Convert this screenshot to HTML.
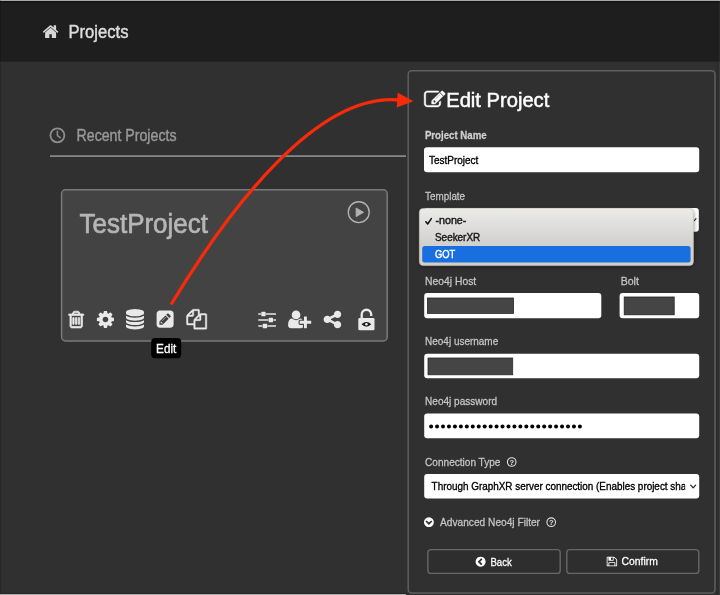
<!DOCTYPE html>
<html lang="en"><head><meta charset="utf-8"><title>Projects - Edit Project</title>
<style>
*{box-sizing:border-box;margin:0;padding:0}
html,body{width:720px;height:595px;overflow:hidden;background:#303030}
body{font-family:"Liberation Sans",sans-serif}
svg{display:block;position:absolute;left:0;top:0;will-change:transform}
text{font-family:"Liberation Sans",sans-serif;white-space:pre}
</style></head><body>
<svg width="720" height="595" viewBox="0 0 720 595" role="img" aria-label="Projects page with Edit Project panel">
<linearGradient id="ddg" x1="0" y1="0" x2="0" y2="1"><stop offset="0" stop-color="#ebebe9"/><stop offset="0.62" stop-color="#d2d1cf"/><stop offset="1" stop-color="#d2cec7"/></linearGradient>
<filter id="sh" x="-10%" y="-20%" width="120%" height="150%"><feGaussianBlur stdDeviation="2.2"/></filter>
<clipPath id="selclip"><rect x="424" y="474" width="261.2" height="25"/></clipPath>
<rect x="0" y="0" width="720" height="595" fill="#303030" />
<rect x="0" y="0" width="720" height="61.7" fill="#1e1e1e" />
<rect x="0" y="0" width="720" height="0.85" fill="#e0e0e0" />
<rect x="0" y="0.85" width="720" height="1.8" fill="#141414" />
<rect x="0" y="0" width="1" height="595" fill="#000" opacity="0.2"/>
<rect x="716" y="62" width="2.7" height="533" fill="#2c2c2c" />
<rect x="718.7" y="0" width="1.3" height="595" fill="#fff" opacity="0.05"/>
<path fill="#d6d6d6" transform="matrix(0.00955 0 0 -0.01005 42.65 38.10)" d="M1408 544v-480q0 -26 -19 -45t-45 -19h-384v384h-256v-384h-384q-26 0 -45 19t-19 45v480q0 1 0.5 3t0.5 3l575 474l575 -474q1 -2 1 -6zM1631 613l-62 -74q-8 -9 -21 -11h-3q-13 0 -21 7l-692 577l-692 -577q-12 -8 -24 -7q-13 2 -21 11l-62 74q-8 10 -7 23.5t11 21.5
l719 599q32 26 76 26t76 -26l244 -204v195q0 14 9 23t23 9h192q14 0 23 -9t9 -23v-408l219 -182q10 -8 11 -21.5t-7 -23.5z" />
<text x="68.50" y="38.10" font-size="18.72" fill="#dddddd" stroke="#dddddd" stroke-width="0.45" textLength="60.00" lengthAdjust="spacingAndGlyphs" >Projects</text>
<circle cx="57.4" cy="135.3" r="7.0" fill="none" stroke="#8f8f8f" stroke-width="1.8"/><path d="M57.4 131.2 V135.6 L60.2 137.6" fill="none" stroke="#8f8f8f" stroke-width="1.5" stroke-linecap="round" stroke-linejoin="round"/>
<text x="76.60" y="141.00" font-size="15.6" fill="#9a9a9a" stroke="#9a9a9a" stroke-width="0.37" textLength="99.88" lengthAdjust="spacingAndGlyphs" >Recent Projects</text>
<rect x="50" y="155.2" width="356" height="1.8" fill="#858585" />
<rect x="61.6" y="189.8" width="325.6" height="151.2" rx="4" fill="#434343" stroke="#7a7a7a" stroke-width="1.5"/>
<text x="79.50" y="233.25" font-size="27.04" fill="#b6b6b6" stroke="#b6b6b6" stroke-width="0.65" textLength="128.47" lengthAdjust="spacingAndGlyphs" >TestProject</text>
<circle cx="358.75" cy="212.15" r="10.45" fill="none" stroke="#b2b2b2" stroke-width="1.35"/><path d="M356.1 208.0 L363.6 212.3 L356.1 216.7 Z" fill="#b2b2b2" stroke="#b2b2b2" stroke-width="0.8" stroke-linejoin="round"/>
<path fill="#e9e9e9" transform="matrix(0.01080 0 0 -0.01087 68.60 326.51)" d="M512 800v-576q0 -14 -9 -23t-23 -9h-64q-14 0 -23 9t-9 23v576q0 14 9 23t23 9h64q14 0 23 -9t9 -23zM768 800v-576q0 -14 -9 -23t-23 -9h-64q-14 0 -23 9t-9 23v576q0 14 9 23t23 9h64q14 0 23 -9t9 -23zM1024 800v-576q0 -14 -9 -23t-23 -9h-64q-14 0 -23 9t-9 23v576
q0 14 9 23t23 9h64q14 0 23 -9t9 -23zM1152 76v948h-896v-948q0 -22 7 -40.5t14.5 -27t10.5 -8.5h832q3 0 10.5 8.5t14.5 27t7 40.5zM480 1152h448l-48 117q-7 9 -17 11h-317q-10 -2 -17 -11zM1408 1120v-64q0 -14 -9 -23t-23 -9h-96v-948q0 -83 -47 -143.5t-113 -60.5h-832
q-66 0 -113 58.5t-47 141.5v952h-96q-14 0 -23 9t-9 23v64q0 14 9 23t23 9h309l70 167q15 37 54 63t79 26h320q40 0 79 -26t54 -63l70 -167h309q14 0 23 -9t9 -23z" stroke="#e9e9e9" stroke-width="70"/>
<path fill="#e9e9e9" transform="matrix(0.01113 0 0 -0.01100 96.90 326.49)" d="M1024 640q0 106 -75 181t-181 75t-181 -75t-75 -181t75 -181t181 -75t181 75t75 181zM1536 749v-222q0 -12 -8 -23t-20 -13l-185 -28q-19 -54 -39 -91q35 -50 107 -138q10 -12 10 -25t-9 -23q-27 -37 -99 -108t-94 -71q-12 0 -26 9l-138 108q-44 -23 -91 -38
q-16 -136 -29 -186q-7 -28 -36 -28h-222q-14 0 -24.5 8.5t-11.5 21.5l-28 184q-49 16 -90 37l-141 -107q-10 -9 -25 -9q-14 0 -25 11q-126 114 -165 168q-7 10 -7 23q0 12 8 23q15 21 51 66.5t54 70.5q-27 50 -41 99l-183 27q-13 2 -21 12.5t-8 23.5v222q0 12 8 23t19 13
l186 28q14 46 39 92q-40 57 -107 138q-10 12 -10 24q0 10 9 23q26 36 98.5 107.5t94.5 71.5q13 0 26 -10l138 -107q44 23 91 38q16 136 29 186q7 28 36 28h222q14 0 24.5 -8.5t11.5 -21.5l28 -184q49 -16 90 -37l142 107q9 9 24 9q13 0 25 -10q129 -119 165 -170q7 -8 7 -22
q0 -12 -8 -23q-15 -21 -51 -66.5t-54 -70.5q26 -50 41 -98l183 -28q13 -2 21 -12.5t8 -23.5z" />
<path fill="#e9e9e9" transform="matrix(0.01172 0 0 -0.01138 126.00 326.49)" d="M768 768q237 0 443 43t325 127v-170q0 -69 -103 -128t-280 -93.5t-385 -34.5t-385 34.5t-280 93.5t-103 128v170q119 -84 325 -127t443 -43zM768 0q237 0 443 43t325 127v-170q0 -69 -103 -128t-280 -93.5t-385 -34.5t-385 34.5t-280 93.5t-103 128v170q119 -84 325 -127
t443 -43zM768 384q237 0 443 43t325 127v-170q0 -69 -103 -128t-280 -93.5t-385 -34.5t-385 34.5t-280 93.5t-103 128v170q119 -84 325 -127t443 -43zM768 1536q208 0 385 -34.5t280 -93.5t103 -128v-128q0 -69 -103 -128t-280 -93.5t-385 -34.5t-385 34.5t-280 93.5
t-103 128v128q0 69 103 128t280 93.5t385 34.5z" />
<path fill="#e9e9e9" transform="matrix(0.01107 0 0 -0.01120 156.60 326.27)" d="M404 428l152 -152l-52 -52h-56v96h-96v56zM818 818q14 -13 -3 -30l-291 -291q-17 -17 -30 -3q-14 13 3 30l291 291q17 17 30 3zM544 128l544 544l-288 288l-544 -544v-288h288zM1152 736l92 92q28 28 28 68t-28 68l-152 152q-28 28 -68 28t-68 -28l-92 -92zM1536 1120
v-960q0 -119 -84.5 -203.5t-203.5 -84.5h-960q-119 0 -203.5 84.5t-84.5 203.5v960q0 119 84.5 203.5t203.5 84.5h960q119 0 203.5 -84.5t84.5 -203.5z" />
<path fill="#e9e9e9" transform="matrix(0.01133 0 0 -0.01110 186.50 326.36)" d="M1696 1152q40 0 68 -28t28 -68v-1216q0 -40 -28 -68t-68 -28h-960q-40 0 -68 28t-28 68v288h-544q-40 0 -68 28t-28 68v672q0 40 20 88t48 76l408 408q28 28 76 48t88 20h416q40 0 68 -28t28 -68v-328q68 40 128 40h416zM1152 939l-299 -299h299v299zM512 1323l-299 -299
h299v299zM708 676l316 316v416h-384v-416q0 -40 -28 -68t-68 -28h-416v-640h512v256q0 40 20 88t48 76zM1664 -128v1152h-384v-416q0 -40 -28 -68t-68 -28h-416v-640h896z" stroke="#e9e9e9" stroke-width="40"/>
<path fill="#e9e9e9" transform="matrix(0.01152 0 0 -0.01172 258.30 326.70)" d="M352 128v-128h-352v128h352zM704 256q26 0 45 -19t19 -45v-256q0 -26 -19 -45t-45 -19h-256q-26 0 -45 19t-19 45v256q0 26 19 45t45 19h256zM864 640v-128h-864v128h864zM224 1152v-128h-224v128h224zM1536 128v-128h-736v128h736zM576 1280q26 0 45 -19t19 -45v-256
q0 -26 -19 -45t-45 -19h-256q-26 0 -45 19t-19 45v256q0 26 19 45t45 19h256zM1216 768q26 0 45 -19t19 -45v-256q0 -26 -19 -45t-45 -19h-256q-26 0 -45 19t-19 45v256q0 26 19 45t45 19h256zM1536 640v-128h-224v128h224zM1536 1152v-128h-864v128h864z" />
<path fill="#e9e9e9" transform="matrix(0.01128 0 0 -0.01152 288.10 326.72)" d="M704 640q-159 0 -271.5 112.5t-112.5 271.5t112.5 271.5t271.5 112.5t271.5 -112.5t112.5 -271.5t-112.5 -271.5t-271.5 -112.5zM1664 512h352q13 0 22.5 -9.5t9.5 -22.5v-192q0 -13 -9.5 -22.5t-22.5 -9.5h-352v-352q0 -13 -9.5 -22.5t-22.5 -9.5h-192q-13 0 -22.5 9.5
t-9.5 22.5v352h-352q-13 0 -22.5 9.5t-9.5 22.5v192q0 13 9.5 22.5t22.5 9.5h352v352q0 13 9.5 22.5t22.5 9.5h192q13 0 22.5 -9.5t9.5 -22.5v-352zM928 288q0 -52 38 -90t90 -38h256v-238q-68 -50 -171 -50h-874q-121 0 -194 69t-73 190q0 53 3.5 103.5t14 109t26.5 108.5
t43 97.5t62 81t85.5 53.5t111.5 20q19 0 39 -17q79 -61 154.5 -91.5t164.5 -30.5t164.5 30.5t154.5 91.5q20 17 39 17q132 0 217 -96h-223q-52 0 -90 -38t-38 -90v-192z" />
<path fill="#e9e9e9" transform="matrix(0.01146 0 0 -0.01139 323.60 326.74)" d="M1216 512q133 0 226.5 -93.5t93.5 -226.5t-93.5 -226.5t-226.5 -93.5t-226.5 93.5t-93.5 226.5q0 12 2 34l-360 180q-92 -86 -218 -86q-133 0 -226.5 93.5t-93.5 226.5t93.5 226.5t226.5 93.5q126 0 218 -86l360 180q-2 22 -2 34q0 133 93.5 226.5t226.5 93.5
t226.5 -93.5t93.5 -226.5t-93.5 -226.5t-226.5 -93.5q-126 0 -218 86l-360 -180q2 -22 2 -34t-2 -34l360 -180q92 86 218 86z" />
<rect x="358.3" y="317.9" width="16.2" height="12.4" rx="1.3" fill="#e9e9e9"/><path d="M361.7 318.5 V314.5 A4.75 4.75 0 0 1 371.2 314.5 V316.0" fill="none" stroke="#e9e9e9" stroke-width="2.3"/><path d="M361.5 324.3 Q366.4 319.6 371.3 324.3 Q366.4 329.0 361.5 324.3 Z" fill="#1c1c1c"/><circle cx="366.4" cy="324.3" r="1.25" fill="#f4f4f4"/>
<rect x="151.2" y="338" width="30" height="20.3" rx="4" fill="#000" />
<text x="156.10" y="352.60" font-size="12.48" fill="#ffffff" stroke="#ffffff" stroke-width="0.3" textLength="20.21" lengthAdjust="spacingAndGlyphs" >Edit</text>
<rect x="408.2" y="70.8" width="306.8" height="522.1" rx="3.5" fill="#303030" stroke="#5e5e5e" stroke-width="1.5"/>
<path fill="#ffffff" transform="matrix(0.01172 0 0 -0.01136 424.20 106.90)" d="M888 352l116 116l-152 152l-116 -116v-56h96v-96h56zM1328 1072q-16 16 -33 -1l-350 -350q-17 -17 -1 -33t33 1l350 350q17 17 1 33zM1408 478v-190q0 -119 -84.5 -203.5t-203.5 -84.5h-832q-119 0 -203.5 84.5t-84.5 203.5v832q0 119 84.5 203.5t203.5 84.5h832
q63 0 117 -25q15 -7 18 -23q3 -17 -9 -29l-49 -49q-14 -14 -32 -8q-23 6 -45 6h-832q-66 0 -113 -47t-47 -113v-832q0 -66 47 -113t113 -47h832q66 0 113 47t47 113v126q0 13 9 22l64 64q15 15 35 7t20 -29zM1312 1216l288 -288l-672 -672h-288v288zM1756 1084l-92 -92
l-288 288l92 92q28 28 68 28t68 -28l152 -152q28 -28 28 -68t-28 -68z" stroke="#fff" stroke-width="40"/>
<text x="446.20" y="107.10" font-size="20.8" fill="#ffffff" stroke="#ffffff" stroke-width="0.5" textLength="103.12" lengthAdjust="spacingAndGlyphs" >Edit Project</text>
<text x="424.90" y="139.30" font-size="11.44" fill="#cfcfcf" font-weight="bold" stroke="#cfcfcf" stroke-width="0.27" textLength="61.79" lengthAdjust="spacingAndGlyphs" >Project Name</text>
<rect x="424" y="147.3" width="275.2" height="24.9" rx="3" fill="#fff" />
<text x="428.90" y="164.00" font-size="11.44" fill="#000" stroke="#000" stroke-width="0.35" textLength="49.49" lengthAdjust="spacingAndGlyphs" >TestProject</text>
<text x="425.10" y="199.60" font-size="11.44" fill="#c6c6c6" stroke="#c6c6c6" stroke-width="0.27" textLength="40.00" lengthAdjust="spacingAndGlyphs" >Template</text>
<rect x="424" y="207.9" width="274.8" height="23.8" rx="3" fill="#fff" />
<path d="M694.0 221.0 L696.3 218.3" fill="none" stroke="#222" stroke-width="1.1"/>
<rect x="419.3" y="209.5" width="274.5" height="57.5" rx="5" fill="#000" opacity="0.45" filter="url(#sh)"/>
<rect x="419.3" y="208.4" width="274.1" height="57.2" rx="4" fill="url(#ddg)" stroke="#cfc8bb" stroke-width="0.6"/>
<rect x="422.2" y="246" width="268.4" height="16.6" rx="2.5" fill="#1a6fe0" />
<path d="M425.9 221.7 L427.7 224.0 L431.3 218.6" fill="none" stroke="#111" stroke-width="1.5" stroke-linecap="round" stroke-linejoin="round"/>
<text x="435.40" y="224.10" font-size="11.2" fill="#1a1a1a" stroke="#1a1a1a" stroke-width="0.45" textLength="31.01" lengthAdjust="spacingAndGlyphs" >-none-</text>
<text x="435.00" y="240.90" font-size="11.2" fill="#1a1a1a" stroke="#1a1a1a" stroke-width="0.45" textLength="45.20" lengthAdjust="spacingAndGlyphs" >SeekerXR</text>
<text x="435.00" y="257.70" font-size="11.2" fill="#ffffff" stroke="#ffffff" stroke-width="0.45" textLength="20.29" lengthAdjust="spacingAndGlyphs" >GOT</text>
<text x="425.10" y="285.00" font-size="11.44" fill="#c6c6c6" stroke="#c6c6c6" stroke-width="0.27" textLength="51.09" lengthAdjust="spacingAndGlyphs" >Neo4j Host</text>
<text x="620.70" y="285.00" font-size="11.44" fill="#c6c6c6" stroke="#c6c6c6" stroke-width="0.27" textLength="18.21" lengthAdjust="spacingAndGlyphs" >Bolt</text>
<rect x="424.2" y="293" width="177.1" height="25.2" rx="3" fill="#fff" />
<rect x="427.4" y="298" width="86.2" height="15.4" fill="#454545" stroke="#2a2a2a" stroke-width="0.8"/>
<rect x="619.6" y="293" width="79.6" height="25.2" rx="3" fill="#fff" />
<rect x="624.2" y="297" width="50" height="17.8" fill="#454545" stroke="#222" stroke-width="0.8"/>
<text x="425.10" y="345.00" font-size="11.44" fill="#c6c6c6" stroke="#c6c6c6" stroke-width="0.27" textLength="73.10" lengthAdjust="spacingAndGlyphs" >Neo4j username</text>
<rect x="424.2" y="353.7" width="275" height="24.6" rx="3" fill="#fff" />
<rect x="428" y="358" width="84.7" height="16.8" fill="#454545" stroke="#2a2a2a" stroke-width="0.8"/>
<text x="425.10" y="405.40" font-size="11.44" fill="#c6c6c6" stroke="#c6c6c6" stroke-width="0.27" textLength="72.01" lengthAdjust="spacingAndGlyphs" >Neo4j password</text>
<rect x="424.2" y="413.4" width="275" height="24.9" rx="3" fill="#fff" />
<g fill="#000"><circle cx="431.10" cy="426.6" r="2"/><circle cx="437.05" cy="426.6" r="2"/><circle cx="443.00" cy="426.6" r="2"/><circle cx="448.96" cy="426.6" r="2"/><circle cx="454.91" cy="426.6" r="2"/><circle cx="460.86" cy="426.6" r="2"/><circle cx="466.81" cy="426.6" r="2"/><circle cx="472.76" cy="426.6" r="2"/><circle cx="478.72" cy="426.6" r="2"/><circle cx="484.67" cy="426.6" r="2"/><circle cx="490.62" cy="426.6" r="2"/><circle cx="496.57" cy="426.6" r="2"/><circle cx="502.52" cy="426.6" r="2"/><circle cx="508.48" cy="426.6" r="2"/><circle cx="514.43" cy="426.6" r="2"/><circle cx="520.38" cy="426.6" r="2"/><circle cx="526.33" cy="426.6" r="2"/><circle cx="532.28" cy="426.6" r="2"/><circle cx="538.24" cy="426.6" r="2"/><circle cx="544.19" cy="426.6" r="2"/><circle cx="550.14" cy="426.6" r="2"/><circle cx="556.09" cy="426.6" r="2"/><circle cx="562.04" cy="426.6" r="2"/><circle cx="568.00" cy="426.6" r="2"/><circle cx="573.95" cy="426.6" r="2"/><circle cx="579.90" cy="426.6" r="2"/></g>
<text x="425.10" y="465.70" font-size="11.44" fill="#c6c6c6" stroke="#c6c6c6" stroke-width="0.27" textLength="75.30" lengthAdjust="spacingAndGlyphs" >Connection Type</text>
<circle cx="511.7" cy="462" r="4.3" fill="none" stroke="#e0e0e0" stroke-width="1.1"/><text x="511.7" y="464.6" font-size="7.5" font-weight="bold" fill="#e0e0e0" text-anchor="middle">?</text>
<rect x="424.2" y="473.9" width="275" height="24.5" rx="3" fill="#fff" />
<g clip-path="url(#selclip)"><text x="431.60" y="490.30" font-size="11.44" fill="#000" stroke="#000" stroke-width="0.35" textLength="254.69" lengthAdjust="spacingAndGlyphs" >Through GraphXR server connection (Enables project sha</text>
</g><path d="M690.7 485.2 L693.15 487.9 L695.6 485.2" fill="none" stroke="#222" stroke-width="1.25" stroke-linecap="round" stroke-linejoin="round"/>
<path fill="#ffffff" transform="matrix(0.00638 0 0 -0.00638 424.00 526.28)" d="M813 237l454 454q19 19 19 45t-19 45l-102 102q-19 19 -45 19t-45 -19l-307 -307l-307 307q-19 19 -45 19t-45 -19l-102 -102q-19 -19 -19 -45t19 -45l454 -454q19 -19 45 -19t45 19zM1536 640q0 -209 -103 -385.5t-279.5 -279.5t-385.5 -103t-385.5 103t-279.5 279.5
t-103 385.5t103 385.5t279.5 279.5t385.5 103t385.5 -103t279.5 -279.5t103 -385.5z" />
<text x="440.00" y="526.00" font-size="11.44" fill="#c6c6c6" stroke="#c6c6c6" stroke-width="0.27" textLength="100.01" lengthAdjust="spacingAndGlyphs" >Advanced Neo4j Filter</text>
<circle cx="551.2" cy="522.2" r="4.3" fill="none" stroke="#e0e0e0" stroke-width="1.1"/><text x="551.2" y="524.8000000000001" font-size="7.5" font-weight="bold" fill="#e0e0e0" text-anchor="middle">?</text>
<rect x="427.9" y="549.6" width="132.3" height="23.8" rx="3" fill="#2e2e2e" stroke="#676767" stroke-width="1.4"/>
<rect x="566.8" y="549.6" width="132" height="23.8" rx="3" fill="#2e2e2e" stroke="#676767" stroke-width="1.4"/>
<path fill="#ffffff" transform="matrix(0.00651 0 0 -0.00651 475.60 565.87)" d="M909 141l102 102q19 19 19 45t-19 45l-307 307l307 307q19 19 19 45t-19 45l-102 102q-19 19 -45 19t-45 -19l-454 -454q-19 -19 -19 -45t19 -45l454 -454q19 -19 45 -19t45 19zM1536 640q0 -209 -103 -385.5t-279.5 -279.5t-385.5 -103t-385.5 103t-279.5 279.5
t-103 385.5t103 385.5t279.5 279.5t385.5 103t385.5 -103t279.5 -279.5t103 -385.5z" />
<text x="490.40" y="565.60" font-size="11.44" fill="#ffffff" stroke="#ffffff" stroke-width="0.27" textLength="21.38" lengthAdjust="spacingAndGlyphs" >Back</text>
<path fill="#ffffff" transform="matrix(0.00677 0 0 -0.00612 606.70 565.42)" d="M384 0h768v384h-768v-384zM1280 0h128v896q0 14 -10 38.5t-20 34.5l-281 281q-10 10 -34 20t-39 10v-416q0 -40 -28 -68t-68 -28h-576q-40 0 -68 28t-28 68v416h-128v-1280h128v416q0 40 28 68t68 28h832q40 0 68 -28t28 -68v-416zM896 928v320q0 13 -9.5 22.5t-22.5 9.5
h-192q-13 0 -22.5 -9.5t-9.5 -22.5v-320q0 -13 9.5 -22.5t22.5 -9.5h192q13 0 22.5 9.5t9.5 22.5zM1536 896v-928q0 -40 -28 -68t-68 -28h-1344q-40 0 -68 28t-28 68v1344q0 40 28 68t68 28h928q40 0 88 -20t76 -48l280 -280q28 -28 48 -76t20 -88z" />
<text x="621.60" y="565.40" font-size="11.44" fill="#ffffff" stroke="#ffffff" stroke-width="0.27" textLength="36.21" lengthAdjust="spacingAndGlyphs" >Confirm</text>
<rect x="0" y="594.15" width="406" height="0.85" fill="#c6c6c6" />
<rect x="0" y="592.9" width="406" height="1.1" fill="#262626" />
<path d="M171.1 304.5 C232.4 203.1 319.1 92.4 399 100" fill="none" stroke="#f72a0a" stroke-width="3.3"/>
<path d="M397.6 92.5 L413.4 101.3 L396.8 107.6 Z" fill="#f72a0a"/>
</svg>
</body></html>
